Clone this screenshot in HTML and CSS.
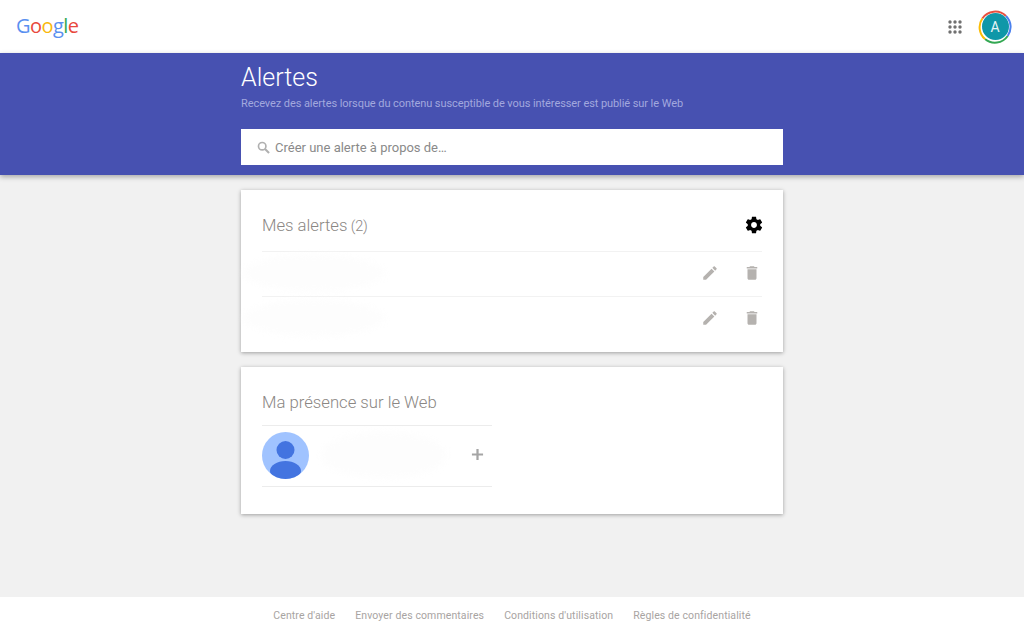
FILE: index.html
```html
<!DOCTYPE html>
<html lang="fr">
<head>
<meta charset="utf-8">
<title>Alertes</title>
<link rel="stylesheet" href="styles.css">
</head>
<body>
<div class="page">
  <header class="topbar">
    <div class="logo"><span class="b">G</span><span class="r">o</span><span class="y">o</span><span class="b">g</span><span class="g">l</span><span class="r">e</span></div>
    <div class="topright">
      <svg class="apps" width="14" height="14" viewBox="0 0 14 14"><g fill="#707070"><circle cx="2" cy="2" r="1.7"/><circle cx="7" cy="2" r="1.7"/><circle cx="12" cy="2" r="1.7"/><circle cx="2" cy="7" r="1.7"/><circle cx="7" cy="7" r="1.7"/><circle cx="12" cy="7" r="1.7"/><circle cx="2" cy="12" r="1.7"/><circle cx="7" cy="12" r="1.7"/><circle cx="12" cy="12" r="1.7"/></g></svg>
      <div class="avatar">
        <svg class="ring" width="34" height="34" viewBox="0 0 34 34" fill="none" stroke-width="2">
          <path d="M4.300 8.500A15.500 15.500 0 0 1 28 6" stroke="#e8503f"/>
          <path d="M28 6A15.500 15.500 0 0 1 29.700 26" stroke="#4a80ee"/>
          <path d="M29.700 26A15.500 15.500 0 0 1 7 29" stroke="#34a853"/>
          <path d="M7 29A15.500 15.500 0 0 1 4.300 8.500" stroke="#fbbc05"/>
        </svg>
        <span class="avatar-in">A</span>
      </div>
    </div>
  </header>
  <section class="band">
    <div class="column">
      <h1 class="title">Alertes</h1>
      <p class="subtitle">Recevez des alertes lorsque du contenu susceptible de vous intéresser est publié sur le Web</p>
      <div class="search">
        <svg width="13" height="13" viewBox="0 0 14 14" fill="none" stroke="#b0b0b0"><circle cx="5.600" cy="5.600" r="4" stroke-width="1.800"/><path d="M8.600 8.600L13 13" stroke-width="2.200"/></svg>
        <span>Créer une alerte à propos de…</span>
      </div>
    </div>
  </section>
  <main class="column cards">
    <section class="card alerts">
      <div class="card-head">
        <h2 class="card-title">Mes alertes<span class="count"> (2)</span></h2>
        <svg class="gear" width="20" height="20" viewBox="0 0 24 24"><path fill="#000" d="M19.430 12.980c.04-.32.07-.64.07-.98s-.03-.66-.07-.98l2.110-1.650c.19-.15.24-.42.12-.64l-2-3.460c-.12-.22-.39-.3-.61-.22l-2.490 1c-.52-.4-1.080-.73-1.690-.98l-.38-2.650C14.460 2.180 14.250 2 14 2h-4c-.25 0-.46.18-.49.42l-.38 2.650c-.61.25-1.170.59-1.690.98l-2.490-1c-.23-.09-.49 0-.61.22l-2 3.460c-.13.22-.07.49.12.64l2.110 1.650c-.04.32-.07.65-.07.98s.03.66.07.98l-2.110 1.650c-.19.15-.24.42-.12.64l2 3.460c.12.22.39.3.61.22l2.490-1c.52.4 1.080.73 1.690.98l.38 2.650c.03.24.24.42.49.42h4c.25 0 .46-.18.49-.42l.38-2.650c.61-.25 1.170-.59 1.690-.98l2.490 1c.23.09.49 0 .61-.22l2-3.460c.12-.22.07-.49-.12-.64l-2.110-1.650zM12 15.500c-1.930 0-3.500-1.570-3.500-3.500s1.570-3.500 3.500-3.500 3.500 1.570 3.500 3.500-1.570 3.500-3.500 3.500z"/></svg>
      </div>
      <div class="alert-row">
        <div class="smudge"></div>
        <div class="row-icons">
          <svg width="18" height="18" viewBox="0 0 24 24"><path fill="#b5b2af" d="M3 17.250V21h3.750L17.810 9.940l-3.750-3.750L3 17.250zM20.710 7.040c.39-.39.39-1.020 0-1.410l-2.340-2.340c-.39-.39-1.020-.39-1.410 0l-1.830 1.830 3.750 3.750 1.830-1.830z"/></svg>
          <svg width="18" height="18" viewBox="0 0 24 24"><path fill="#b5b2af" d="M6 19c0 1.100.9 2 2 2h8c1.100 0 2-.9 2-2V7H6v12zM19 4h-3.500l-1-1h-5l-1 1H5v2h14V4z"/></svg>
        </div>
      </div>
      <div class="alert-row">
        <div class="smudge"></div>
        <div class="row-icons">
          <svg width="18" height="18" viewBox="0 0 24 24"><path fill="#b5b2af" d="M3 17.250V21h3.750L17.810 9.940l-3.750-3.750L3 17.250zM20.710 7.040c.39-.39.39-1.020 0-1.410l-2.340-2.340c-.39-.39-1.020-.39-1.410 0l-1.830 1.830 3.750 3.750 1.830-1.830z"/></svg>
          <svg width="18" height="18" viewBox="0 0 24 24"><path fill="#b5b2af" d="M6 19c0 1.100.9 2 2 2h8c1.100 0 2-.9 2-2V7H6v12zM19 4h-3.500l-1-1h-5l-1 1H5v2h14V4z"/></svg>
        </div>
      </div>
    </section>
    <section class="card presence">
      <h2 class="card-title presence-title">Ma présence sur le Web</h2>
      <div class="presence-row">
        <svg class="person" width="47" height="47" viewBox="0 0 47 47"><defs><clipPath id="disc"><circle cx="23.500" cy="23.500" r="23.500"/></clipPath></defs><circle cx="23.500" cy="23.500" r="23.500" fill="#a0c3ff"/><g clip-path="url(#disc)" fill="#4374e0"><circle cx="23.500" cy="18" r="9"/><ellipse cx="23.500" cy="39" rx="15.500" ry="10"/></g></svg>
        <div class="smudge wide"></div>
        <svg class="plus" width="13" height="13" viewBox="0 0 14 14"><path d="M7 1v12M1 7h12" stroke="#a5a5a5" stroke-width="2.400" fill="none"/></svg>
      </div>
    </section>
  </main>
  <footer class="footer">
    <a>Centre d'aide</a><a>Envoyer des commentaires</a><a>Conditions d'utilisation</a><a>Règles de confidentialité</a>
  </footer>
</div>
</body>
</html>
```
FILE: styles.css
```css
* { box-sizing: border-box; }
html, body { margin: 0; height: 100%; }
body { font-family: Roboto, "Liberation Sans", sans-serif; background: #f1f1f1; overflow: hidden; }
.page { height: 634px; display: flex; flex-direction: column; }
.topbar { height: 53px; background: #fff; display: flex; align-items: center; justify-content: space-between; padding: 0 12px 0 16px; flex: none; }
.logo { font-family: "Open Sans", sans-serif; font-size: 20px; letter-spacing: -0.55px; line-height: 24px; margin-top: -1px; }
.b { color: #5a90f0; } .r { color: #e8483c; } .y { color: #f9b80d; } .g { color: #34a853; }
.topright { display: flex; align-items: center; gap: 16px; }
.avatar { width: 34px; height: 34px; position: relative; display: flex; align-items: center; justify-content: center; }
.ring { position: absolute; left: 0; top: 0; }
.avatar-in { width: 27px; height: 27px; border-radius: 50%; background: #0f97a8; color: #e8f4f5; font-size: 14px; display: flex; align-items: center; justify-content: center; }
.band { background: #4751b1; height: 122px; flex: none; box-shadow: 0 2px 5px rgba(0,0,0,.3); position: relative; }
.column { width: 542px; margin-left: 241px; }
.title { margin: 0; padding-top: 9px; font-size: 25px; font-weight: 300; line-height: 31px; color: #fff; }
.subtitle { margin: 3px 0 0; font-size: 11px; line-height: 16px; color: #a2a8de; white-space: nowrap; letter-spacing: -.076px; }
.search { margin-top: 17px; height: 36px; background: #fff; display: flex; align-items: center; gap: 5px; padding-left: 16px; font-size: 13px; color: #8a8a8a; }
.search span { margin-top: 1px; }
.cards { flex: 1; padding-top: 15px; display: flex; flex-direction: column; gap: 15px; }
.card { background: #fff; box-shadow: 0 1px 4px rgba(0,0,0,.35); padding: 0 21px; }
.alerts { height: 162px; }
.presence { height: 147px; }
.card-head { height: 62px; display: flex; justify-content: space-between; align-items: center; padding-top: 9px; border-bottom: 1px solid #f2f2f2; }
.gear { margin-right: -2px; }
.card-title { margin: 0; font-size: 16.700px; font-weight: 300; color: #8b8784; }
.count { font-size: 14.500px; letter-spacing: -.2px; }
.alert-row { height: 45px; padding-bottom: 3px; display: flex; align-items: center; justify-content: space-between; border-bottom: 1px solid #f2f2f2; }
.alert-row:last-child { border-bottom: 0; }
.smudge { width: 140px; height: 36px; margin-left: -18px; border-radius: 50%; background: #fdfdfd; filter: blur(3px); }
.wide { width: 125px; height: 46px; margin-left: 12px; margin-right: auto; }
.row-icons { display: flex; gap: 24px; margin-right: 1px; }
.presence-title { height: 59px; padding-top: 26px; line-height: 20px; border-bottom: 1px solid #ececec; width: 230px; }
.presence-row { width: 230px; height: 61px; padding-bottom: 3px; display: flex; align-items: center; border-bottom: 1px solid #ececec; padding-right: 8px; }
.person { flex: none; margin-top: 1px; }
.footer { height: 37px; background: #fff; flex: none; display: flex; justify-content: center; align-items: center; gap: 20px; font-size: 10.500px; color: #a8a4a2; letter-spacing: .11px; }
```
